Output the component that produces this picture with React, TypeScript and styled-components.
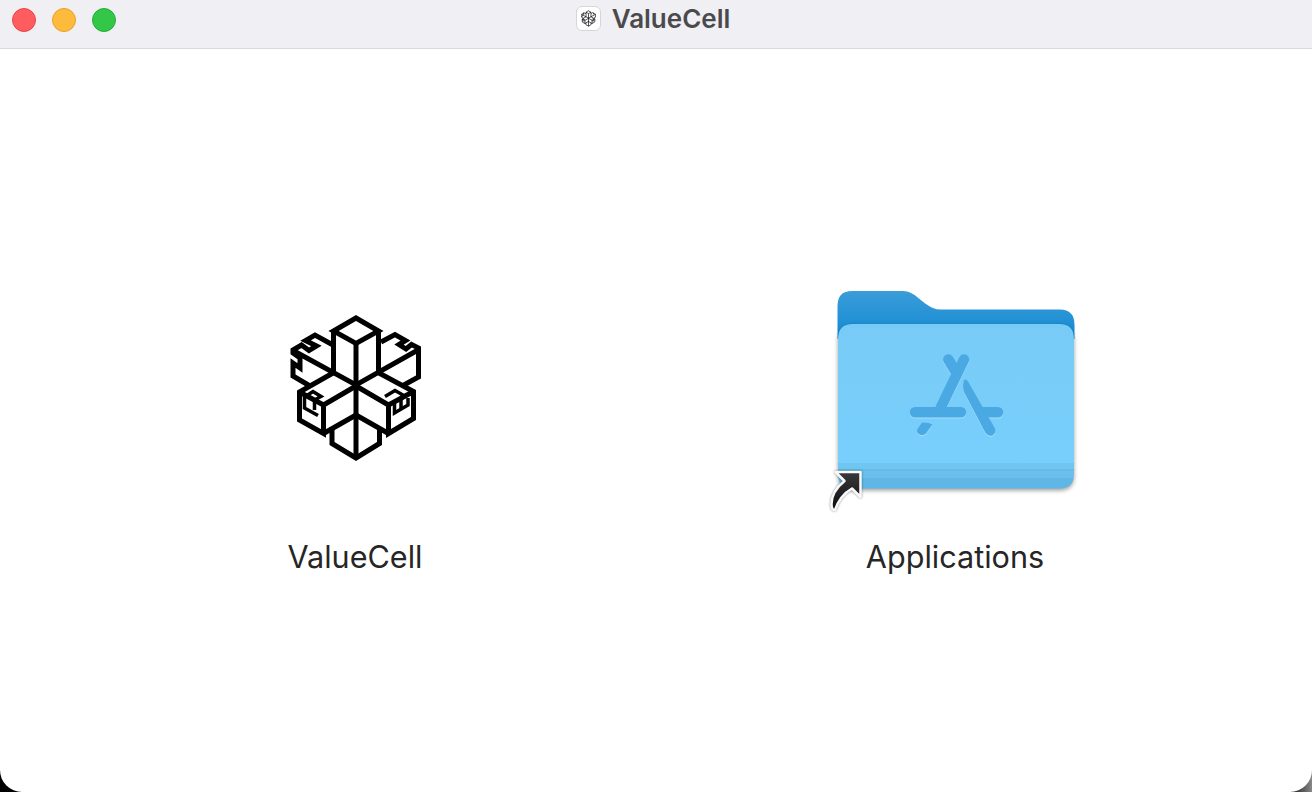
import React from "react";
import styled, { createGlobalStyle } from "styled-components";

const Global = createGlobalStyle`
  html, body { margin: 0; padding: 0; height: 100%; overflow: hidden; }
  body { font-family: Inter, "Liberation Sans", sans-serif; -webkit-font-smoothing: antialiased; }
`;

const Screen = styled.div`
  width: 1312px;
  height: 792px;
  background: linear-gradient(90deg, #000 98%, #888 100%);
`;

const Win = styled.div`
  width: 100%;
  height: 100%;
  display: flex;
  flex-direction: column;
  background: #fff;
  border-radius: 0 0 22px 22px;
  overflow: hidden;
`;

const TitleBar = styled.header`
  height: 48px;
  flex: none;
  position: relative;
  display: flex;
  align-items: center;
  justify-content: center;
  gap: 11px;
  background: #f0eff4;
  border-bottom: 1px solid #d9d8dc;
  box-sizing: content-box;
  padding-right: 6px;
`;

const Lights = styled.div`
  position: absolute;
  left: 12px;
  top: 8px;
  display: flex;
  gap: 16px;
`;

const Light = styled.span<{ $fill: string; $edge: string }>`
  width: 24px;
  height: 24px;
  box-sizing: border-box;
  border-radius: 50%;
  background: ${(p) => p.$fill};
  border: 1px solid ${(p) => p.$edge};
`;

const TitleIcon = styled.span`
  width: 25px;
  height: 25px;
  box-sizing: border-box;
  display: flex;
  align-items: center;
  justify-content: center;
  background: #fff;
  border: 1px solid #d6d5d9;
  border-radius: 6px;
  margin-top: -11px;
`;

const TitleText = styled.span`
  font-size: 26px;
  font-weight: 600;
  color: #4a4a4c;
  line-height: 30px;
  margin-top: -10px;
`;

const Stage = styled.main`
  flex: 1;
  display: flex;
  justify-content: center;
  gap: 300px;
  padding-top: 219px;
`;

const Item = styled.div`
  width: 300px;
  display: flex;
  flex-direction: column;
  align-items: center;
`;

const IconSlot = styled.div`
  height: 248px;
  display: flex;
  justify-content: center;
`;

const Label = styled.div`
  margin: 23px 2px 0 0;
  font-size: 30.6px;
  line-height: 36px;
  font-weight: 400;
  color: #262626;
`;

const Line = styled.g<{ $w: number }>`
  fill: none;
  stroke: #000;
  stroke-width: ${(p) => p.$w};
  stroke-linejoin: miter;
  stroke-linecap: butt;
`;

const Logo = ({ viewBox, width, height, weight = 5 }: { viewBox: string; width: number; height: number; weight?: number }) => (
  <svg viewBox={viewBox} width={width} height={height}>
    <Line $w={weight}>
      {/* top box */}
      <path d="M356 318 L378.5 331 L356 343.5 L333.5 331 Z" />
      <path d="M333.5 331 V373 M356 343.5 V458 M378.5 331 V373" />
      {/* upper left arm */}
      <path d="M333 345 L315 335 L305.5 340.5 L316.5 346 L309 350.5 L301.5 345 L293 350 V353 L300 358 V368 L293 363 V376 L310 386" />
      <path d="M294 351 L356 385 L418 350" />
      {/* upper right arm */}
      <path d="M381 342 L395 334.5 L405.5 340.5 L399 344.5 L406 349 L411.5 344.5 L418.5 348 V377 L402 386" />
      {/* lower left arm */}
      <path d="M333 373 L299.5 392 V420 L323.5 433.5 V405 L356 386 M323.5 405 L299.5 392" />
      <path d="M323.5 433.5 L356 415" />
      <path d="M304.5 396 V408 L318 415.5" strokeWidth={weight * 0.7} />
      <path d="M304.5 397 L313 391.5 L321 396.5 L314.5 400 V410" strokeWidth={weight * 0.7} />
      {/* lower right arm */}
      <path d="M379 373 L413.5 391.5 V418.5 L388.5 433.5 V405 L356 386 M388.5 405 L413.5 391.5" />
      <path d="M388.5 433.5 L356 415" />
      <path d="M394.5 403 V413 L408 405 V398" strokeWidth={weight * 0.7} />
      <path d="M385 396.5 L395 390.5 L403 395 L401 398 V408" strokeWidth={weight * 0.7} />
      {/* bottom box */}
      <path d="M332 427 V443.5 L356 458 L379.5 443.5 V427" />
    </Line>
  </svg>
);

const Glyph = styled.g`
  fill: none;
  stroke: #4aa9e3;
  stroke-width: 10.5px;
  stroke-linecap: round;
  filter: drop-shadow(0 1px 0.6px rgba(255, 255, 255, 0.35));
`;

const GlyphFill = styled.path`
  fill: #4aa9e3;
  stroke: none;
`;

const FolderFront = styled.path`
  filter: drop-shadow(0 2px 2px rgba(0, 0, 0, 0.38));
`;

const ArrowShape = styled.path`
  stroke: #fafafa;
  stroke-width: 2.5px;
  stroke-linejoin: round;
  filter: drop-shadow(0 0.5px 1px rgba(0, 0, 0, 0.45));
`;

const Folder = () => (
  <svg viewBox="821 268 270 248" width={270} height={248}>
    <defs>
      <linearGradient id="back" x1="0" y1="0" x2="0" y2="1">
        <stop offset="0" stopColor="#3b9cd8" />
        <stop offset="1" stopColor="#128ad3" />
      </linearGradient>
      <linearGradient id="front" x1="0" y1="0" x2="0" y2="1">
        <stop offset="0" stopColor="#78cbf7" />
        <stop offset="0.842" stopColor="#78cffb" />
        <stop offset="0.842" stopColor="#6ec6f1" />
        <stop offset="0.88" stopColor="#6ec6f1" />
        <stop offset="0.88" stopColor="#63bbe8" />
        <stop offset="0.895" stopColor="#63bbe8" />
        <stop offset="0.895" stopColor="#6abfec" />
        <stop offset="0.935" stopColor="#6abfec" />
        <stop offset="0.935" stopColor="#5fb7e6" />
        <stop offset="1" stopColor="#5db6e5" />
      </linearGradient>
      <linearGradient id="arrow" x1="0" y1="0" x2="0" y2="1">
        <stop offset="0" stopColor="#3a3a3e" />
        <stop offset="1" stopColor="#0c0c0e" />
      </linearGradient>
    </defs>
    <path
      fill="url(#back)"
      d="M837.5 306 Q837.5 291 852 291 H903 C915 291 921 303 933 308 Q936 309.5 941 309.5 H1060 Q1074.5 309.5 1074.5 325 V339 H837.5 Z"
    />
    <FolderFront
      fill="url(#front)"
      d="M838 339 Q838 324 853 324 H1059 Q1074 324 1074 339 V474 Q1074 488.5 1059.5 488.5 H852.5 Q838 488.5 838 474 Z"
    />
    <Glyph>
      <path d="M964 359.5 L941 407" />
      <path d="M948.3 359.5 L956.5 373" />
      <path d="M915 412.3 H961" />
      <path d="M981 412.3 H998" />
      <GlyphFill d="M964 380 Q962 386 964 392 L985 432 Q988.5 437 992.5 435.5 Q996.5 433 995 428.5 L968 381.5 Q966 378.5 964 380 Z" />
      <GlyphFill d="M922 422.5 Q928 422 932.5 424.5 L926 433.5 Q922 436.5 918.5 434 Q916 431.5 917.5 429 Z" />
    </Glyph>
    <ArrowShape
      fill="url(#arrow)"
      d="M835.5 472 H860.5 V497 L852 488.5 C844 493 838 501 835 510 C832.5 510.5 831.5 508 831.5 504 C831.5 495 837 487 844.5 481 Z"
    />
  </svg>
);

export default function App() {
  return (
    <Screen>
      <Global />
      <Win>
        <TitleBar>
          <Lights>
            <Light $fill="#fe5c5e" $edge="#e4494c" />
            <Light $fill="#febb3b" $edge="#e3a02c" />
            <Light $fill="#33c748" $edge="#27ad3a" />
          </Lights>
          <TitleIcon>
            <Logo viewBox="288 314 136 148" width={15} height={17} weight={6} />
          </TitleIcon>
          <TitleText>ValueCell</TitleText>
        </TitleBar>
        <Stage>
          <Item>
            <IconSlot>
              <Logo viewBox="286 268 140 248" width={140} height={248} />
            </IconSlot>
            <Label>ValueCell</Label>
          </Item>
          <Item>
            <IconSlot>
              <Folder />
            </IconSlot>
            <Label>Applications</Label>
          </Item>
        </Stage>
      </Win>
    </Screen>
  );
}
